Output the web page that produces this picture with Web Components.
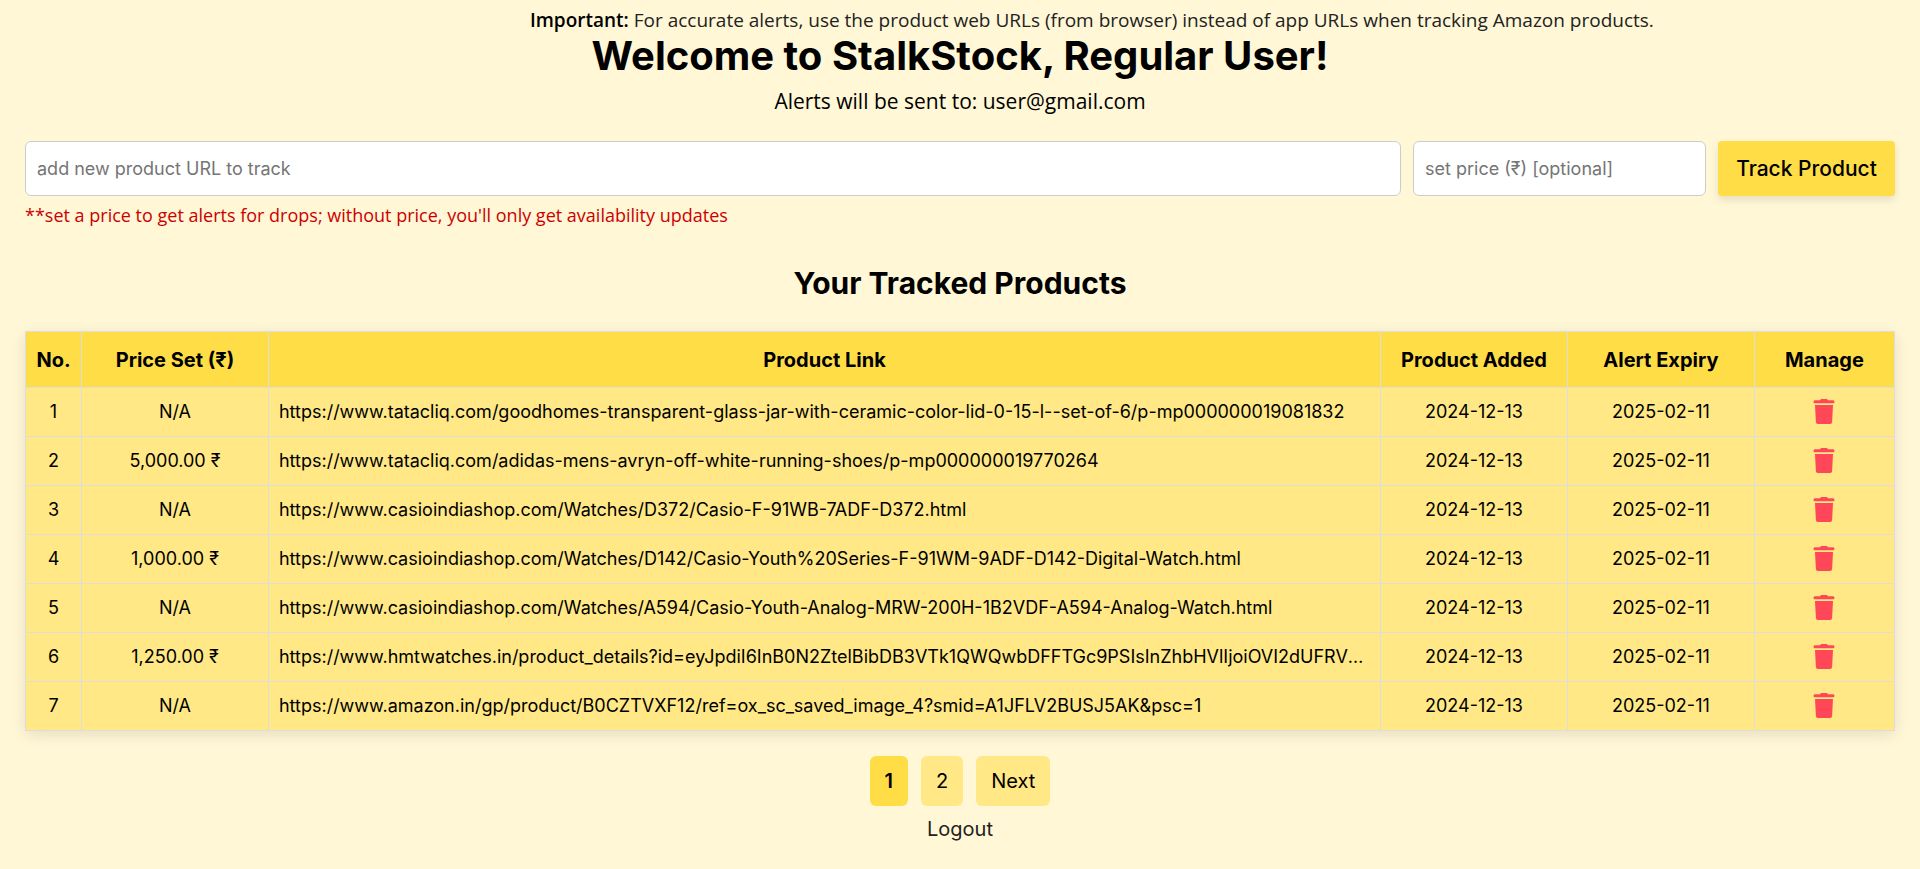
<!DOCTYPE html>
<html lang="en">
<head>
<meta charset="utf-8">
<title>StalkStock</title>
<style>
html { --page: #fff7d6; --accent: #ffdd47; --soft: #ffe885; --line: #ddd; --danger: #ff4757; --prose: "Open Sans", sans-serif; }
body { margin: 0; background: var(--page); color: #000; font-family: Inter, sans-serif; }
</style>
</head>
<body>
<stock-app>
  <stock-notice slot="notice"><strong>Important:</strong> For accurate alerts, use the product web URLs (from browser) instead of app URLs when tracking Amazon products.</stock-notice>
  <stock-welcome name="Regular User" email="user@gmail.com"></stock-welcome>
  <track-form>**set a price to get alerts for drops; without price, you'll only get availability updates</track-form>
  <product-table>Your Tracked Products</product-table>
  <page-nav></page-nav>
</stock-app>
<script>
function define(name, markup, setup) {
  const template = document.createElement('template');
  template.innerHTML = markup;
  customElements.define(name, class extends HTMLElement {
    constructor() {
      super();
      this.attachShadow({ mode: 'open' }).append(template.content.cloneNode(true));
    }
    connectedCallback() { if (setup) setup(this, this.shadowRoot); }
  });
}

define('stock-app', `
<style>
:host { display: block; padding: 6px 25px 24px; }
main { display: flex; flex-direction: column; }
</style>
<slot name="notice"></slot>
<main><slot></slot></main>`);

define('stock-notice', `
<style>
:host { display: block; padding-left: 27%; font: 19px/28px var(--prose); color: #222; white-space: nowrap; }
::slotted(strong) { color: #000; font-weight: 600; }
</style>
<slot></slot>`);

define('stock-welcome', `
<style>
:host { display: block; text-align: center; }
h1 { margin: 0; font-size: 40px; line-height: 44px; font-weight: 700; }
p { margin: 7px 0 0; font: 21px/32px var(--prose); }
</style>
<h1></h1><p></p>`, (host, root) => {
  root.querySelector('h1').textContent = 'Welcome to StalkStock, ' + host.getAttribute('name') + '!';
  root.querySelector('p').textContent = 'Alerts will be sent to: ' + host.getAttribute('email');
});

define('track-form', `
<style>
:host { display: block; margin-top: 24px; }
form { display: grid; grid-template-columns: minmax(0, 1fr) 293px 177px; gap: 12px; }
input, button { box-sizing: border-box; height: 55px; border-radius: 6px; }
input { width: 100%; margin: 0; padding: 0 11px; border: 1px solid #ccc; background: #fff; font: 18px/24px Inter, sans-serif; }
input::placeholder { color: #757575; opacity: 1; }
button { border: 0; border-radius: 4px; padding: 0; background: var(--accent); color: #000; font: 500 21px/24px Inter, sans-serif; box-shadow: 0 4px 8px rgba(0, 0, 0, .1); cursor: pointer; }
.hint { margin: 6px 0 0; font: 18px/26px var(--prose); color: #c00; }
</style>
<form>
  <input type="url" placeholder="add new product URL to track" aria-label="Product URL">
  <input type="text" placeholder="set price (₹) [optional]" aria-label="Price">
  <button type="button">Track Product</button>
</form>
<p class="hint"><slot></slot></p>`);

define('product-table', `
<style>
:host { display: block; margin-top: 33px; }
h2 { margin: 0 0 26px; font-size: 30px; line-height: 44px; font-weight: 700; text-align: center; }
table { width: 100%; table-layout: fixed; border-collapse: collapse; background: var(--soft); box-shadow: 0 4px 15px rgba(0, 0, 0, .1); }
th, td { box-sizing: border-box; border: 1px solid var(--line); padding: 0 10px; text-align: center; white-space: nowrap; }
th { height: 56px; padding: 0; background: var(--accent); font-size: 20px; font-weight: 700; }
td { height: 49px; font-size: 18px; line-height: 24px; }
td.link { text-align: left; overflow: hidden; text-overflow: ellipsis; }
col.no { width: 3%; } col.price, col.date { width: 10%; } col.manage { width: 7.5%; }
button { display: block; margin: 0 auto; padding: 0 0 2px; border: 0; background: none; cursor: pointer; }
svg { display: block; width: 22px; height: 26px; fill: var(--danger); }
</style>
<h2><slot></slot></h2>
<table>
  <colgroup><col class="no"><col class="price"><col><col class="date"><col class="date"><col class="manage"></colgroup>
  <thead><tr><th scope="col">No.</th><th scope="col">Price Set (₹)</th><th scope="col">Product Link</th><th scope="col">Product Added</th><th scope="col">Alert Expiry</th><th scope="col">Manage</th></tr></thead>
  <tbody></tbody>
</table>`, (host, root) => {
  const products = [
    ['N/A', 'https://www.tatacliq.com/goodhomes-transparent-glass-jar-with-ceramic-color-lid-0-15-l--set-of-6/p-mp000000019081832'],
    ['5,000.00 ₹', 'https://www.tatacliq.com/adidas-mens-avryn-off-white-running-shoes/p-mp000000019770264'],
    ['N/A', 'https://www.casioindiashop.com/Watches/D372/Casio-F-91WB-7ADF-D372.html'],
    ['1,000.00 ₹', 'https://www.casioindiashop.com/Watches/D142/Casio-Youth%20Series-F-91WM-9ADF-D142-Digital-Watch.html'],
    ['N/A', 'https://www.casioindiashop.com/Watches/A594/Casio-Youth-Analog-MRW-200H-1B2VDF-A594-Analog-Watch.html'],
    ['1,250.00 ₹', 'https://www.hmtwatches.in/product_details?id=eyJpdiI6InB0N2ZtelBibDB3VTk1QWQwbDFFTGc9PSIsInZhbHVlIjoiOVI2dUFRVkl...'],
    ['N/A', 'https://www.amazon.in/gp/product/B0CZTVXF12/ref=ox_sc_saved_image_4?smid=A1JFLV2BUSJ5AK&psc=1']
  ];
  const body = root.querySelector('tbody');
  products.forEach(([price, link], i) => {
    const row = body.insertRow();
    [i + 1, price, link, '2024-12-13', '2025-02-11'].forEach(text => { row.insertCell().textContent = text; });
    row.cells[2].className = 'link';
    row.insertCell().innerHTML = '<button type="button" aria-label="Delete"><svg viewBox="0 0 22 26"><path d="M7 2.2Q7.5 1 8.700 1h4.600Q14.500 1 15 2.200h5.200Q21.500 2.200 21.500 3.700T20.200 5.200H1.800Q.5 5.200.5 3.700T1.800 2.200ZM2 7h18l-.9 17q-.1 2-2 2H4.900q-1.900 0-2-2Z"/></svg></button>';
  });
});

define('page-nav', `
<style>
:host { display: flex; flex-direction: column; align-items: center; gap: 8px; margin-top: 25px; font-size: 20px; line-height: 30px; }
nav { display: flex; gap: 13px; }
a { color: #000; text-decoration: none; }
nav a { padding: 10px 15px; border-radius: 6px; background: var(--soft); }
nav a[aria-current] { background: var(--accent); font-weight: 600; }
.logout { color: #222; }
</style>
<nav aria-label="Pages"><a href="#1" aria-current="page">1</a><a href="#2">2</a><a href="#2">Next</a></nav>
<a class="logout" href="#logout">Logout</a>`);
</script>
</body>
</html>
